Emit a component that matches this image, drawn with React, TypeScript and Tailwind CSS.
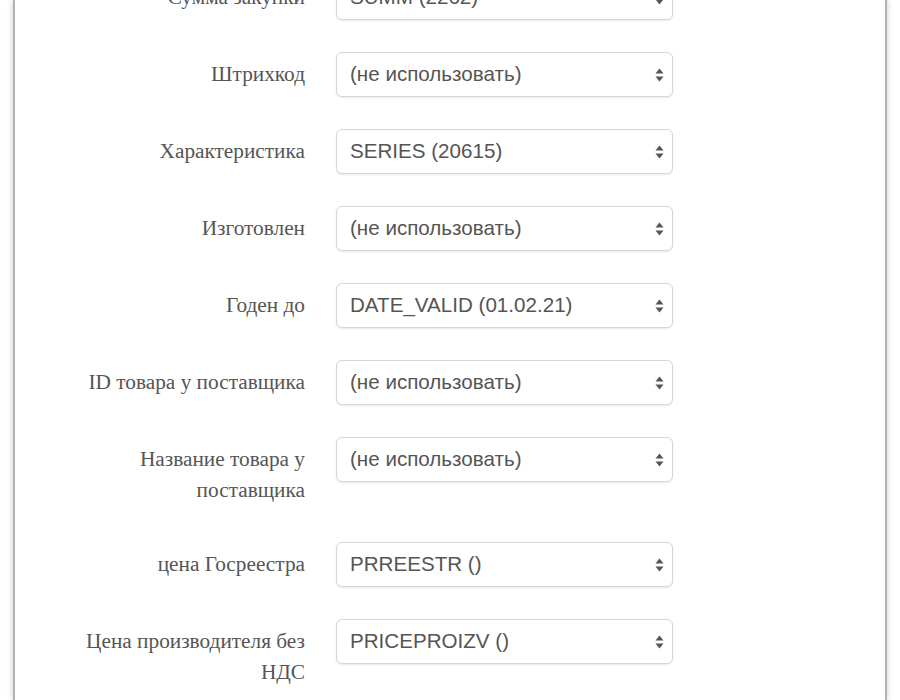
type Row = {
  label: React.ReactNode;
  value: string;
};

const rows: Row[] = [
  { label: "Сумма закупки", value: "SUMM (2262)" },
  { label: "Штрихкод", value: "(не использовать)" },
  { label: "Характеристика", value: "SERIES (20615)" },
  { label: "Изготовлен", value: "(не использовать)" },
  { label: "Годен до", value: "DATE_VALID (01.02.21)" },
  { label: "ID товара у поставщика", value: "(не использовать)" },
  {
    label: (
      <>
        Название товара у<br />
        поставщика
      </>
    ),
    value: "(не использовать)",
  },
  { label: "цена Госреестра", value: "PRREESTR ()" },
  {
    label: (
      <>
        Цена производителя без<br />
        НДС
      </>
    ),
    value: "PRICEPROIZV ()",
  },
];

function UpDown() {
  return (
    <svg width="9" height="14" viewBox="0 0 9 14" className="shrink-0">
      <path d="M4.5 0.5 L8.5 5.6 H0.5 Z" fill="#555" />
      <path d="M4.5 13.5 L8.5 8.4 H0.5 Z" fill="#555" />
    </svg>
  );
}

function SelectBox({ value }: { value: string }) {
  return (
    <div className="flex h-[45px] w-[337px] shrink-0 items-center justify-between rounded-[6px] border border-[#d6d6d6] bg-white pl-[13px] pr-[8px] shadow-[0_1px_2px_rgba(0,0,0,0.09)]">
      <span className="font-['Liberation_Sans',Arial,sans-serif] text-[20.6px] text-[#555]">
        {value}
      </span>
      <UpDown />
    </div>
  );
}

export default function App() {
  return (
    <div className="h-[700px] overflow-hidden bg-white px-[13px]">
      <div className="flex h-full flex-col border-x-2 border-[#b3b3b3] bg-white shadow-[0_0_6px_rgba(0,0,0,0.22)]">
        <div className="-mt-[25px] flex flex-col gap-[32px]">
          {rows.map((row, i) => (
            <div key={i} className="flex items-start">
              <div className="w-[290px] shrink-0 pb-[4px] pt-[7px] text-right font-['Liberation_Serif','Times_New_Roman',serif] text-[21.3px] leading-[31px] text-[#555]">
                {row.label}
              </div>
              <div className="ml-[31px]">
                <SelectBox value={row.value} />
              </div>
            </div>
          ))}
        </div>
      </div>
    </div>
  );
}
